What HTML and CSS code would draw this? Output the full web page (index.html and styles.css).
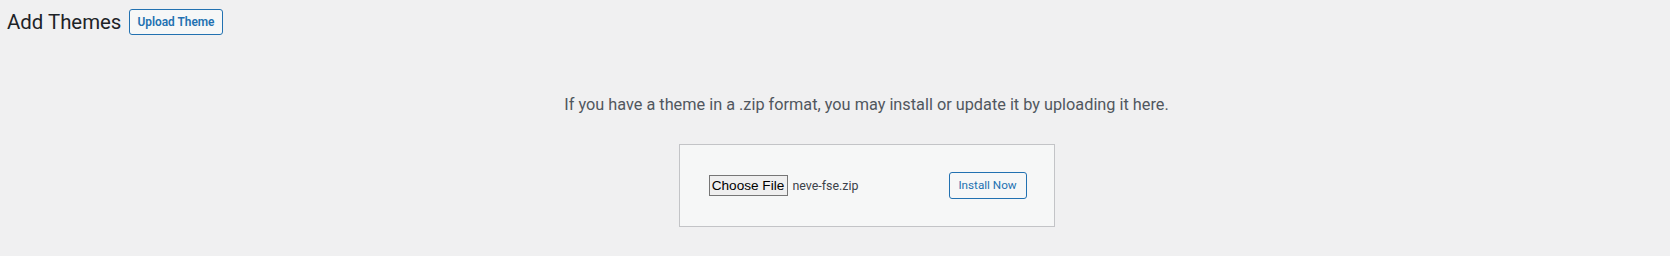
FILE: index.html
```html
<!DOCTYPE html>
<html lang="en">
<head>
<meta charset="utf-8">
<title>Add Themes</title>
<link rel="stylesheet" href="styles.css">
</head>
<body>
<div class="wrap">
  <div class="page-header">
    <h1 class="page-title">Add Themes</h1>
    <a class="page-title-action" href="#">Upload Theme</a>
  </div>
  <div class="upload-theme">
    <p class="install-help">If you have a theme in a .zip format, you may install or update it by uploading it here.</p>
    <div class="form-row">
      <form class="upload-form">
        <div class="file-input">
          <span class="file-button">Choose File</span>
          <span class="file-name">neve-fse.zip</span>
        </div>
        <button type="button" class="button-secondary">Install Now</button>
      </form>
    </div>
  </div>
</div>
</body>
</html>
```
FILE: styles.css
```css
html, body {
  margin: 0;
  padding: 0;
  background: #f0f0f1;
}

body {
  font-family: Roboto, "Noto Sans", sans-serif;
  color: #3c434a;
}

.wrap {
  padding: 9px 0 0 7px;
}

.page-header {
  display: flex;
  align-items: center;
  height: 26px;
}

.page-title {
  margin: 0;
  font-size: 20.4px;
  font-weight: 400;
  line-height: 26px;
  color: #1d2327;
}

.page-title-action {
  margin-left: 8px;
  box-sizing: border-box;
  height: 26px;
  padding: 0 7px;
  border: 1px solid #2271b1;
  border-radius: 3px;
  background: #f6f7f7;
  color: #2271b1;
  font-size: 11.9px;
  font-weight: 600;
  line-height: 24px;
  text-decoration: none;
}

.upload-theme {
  margin-top: 60px;
  padding-left: 56px;
}

.install-help {
  margin: 0;
  text-align: center;
  font-size: 16.3px;
  line-height: 20px;
  color: #50575e;
}

.form-row {
  display: flex;
  justify-content: center;
  margin-top: 29px;
}

.upload-form {
  display: flex;
  align-items: center;
  margin: 0;
  padding: 27px;
  border: 1px solid #c3c4c7;
  background: #f6f7f7;
}

.file-input {
  display: flex;
  align-items: center;
  width: 240px;
  margin-left: 2px;
}

.file-button {
  box-sizing: border-box;
  width: 79px;
  height: 21px;
  border: 1px solid #767676;
  background: #efefef;
  color: #000;
  font-family: "Liberation Sans", Arial, sans-serif;
  font-size: 13.6px;
  line-height: 19px;
  text-align: center;
}

.file-name {
  margin-left: 5px;
  font-size: 12.4px;
  color: #3c434a;
}

.button-secondary {
  box-sizing: border-box;
  width: 78px;
  height: 27px;
  padding: 0;
  border: 1px solid #2271b1;
  border-radius: 3px;
  background: #f6f7f7;
  color: #2271b1;
  font-family: Roboto, "Noto Sans", sans-serif;
  font-size: 11.7px;
  font-weight: 400;
  line-height: 25px;
}
```
